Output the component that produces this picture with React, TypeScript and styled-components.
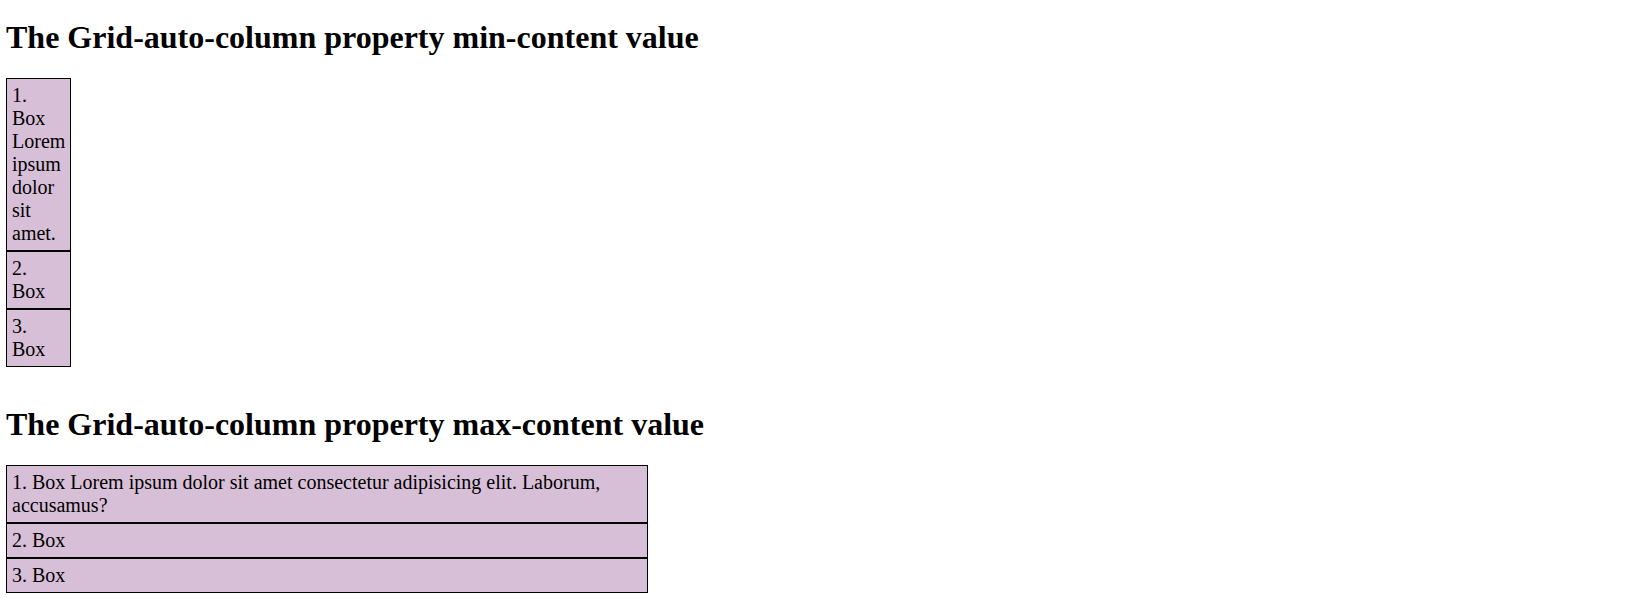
import React from 'react';
import styled, { createGlobalStyle } from 'styled-components';

const GlobalStyle = createGlobalStyle`
  body {
    margin: 0;
    background: #ffffff;
    color: #000000;
    font-family: 'Liberation Serif', 'Times New Roman', serif;
  }
`;

const items = [
  {
    min: '1. Box Lorem ipsum dolor sit amet.',
    max: '1. Box Lorem ipsum dolor sit amet consectetur adipisicing elit. Laborum, accusamus?',
  },
  { min: '2. Box', max: '2. Box' },
  { min: '3. Box', max: '3. Box' },
];

const App = () => {
  return (
    <>
      <GlobalStyle />
      <Page>
        <Section>
          <Title>The Grid-auto-column property min-content value</Title>
          <Grid $track="min-content">
            {items.map((item) => (
              <Cell key={item.min}>{item.min}</Cell>
            ))}
          </Grid>
        </Section>
        <Section>
          <Title>The Grid-auto-column property max-content value</Title>
          <Grid $track="642px">
            {items.map((item) => (
              <Cell key={item.max}>{item.max}</Cell>
            ))}
          </Grid>
        </Section>
      </Page>
    </>
  );
};

export default App;

const Page = styled.main`
  display: flex;
  flex-direction: column;
  gap: 39px;
  padding: 19px 6px 0;
`;

const Section = styled.section`
  display: flex;
  flex-direction: column;
`;

const Title = styled.h1`
  margin: 0 0 22px;
  font-size: 32px;
  font-weight: 700;
  line-height: 37px;
`;

const Grid = styled.div<{ $track: string }>`
  display: grid;
  grid-auto-columns: ${({ $track }) => $track};
`;

const Cell = styled.div`
  padding: 5px;
  border: 1px solid #000000;
  background: #d8bfd8;
  font-size: 20px;
  line-height: 23px;
`;
